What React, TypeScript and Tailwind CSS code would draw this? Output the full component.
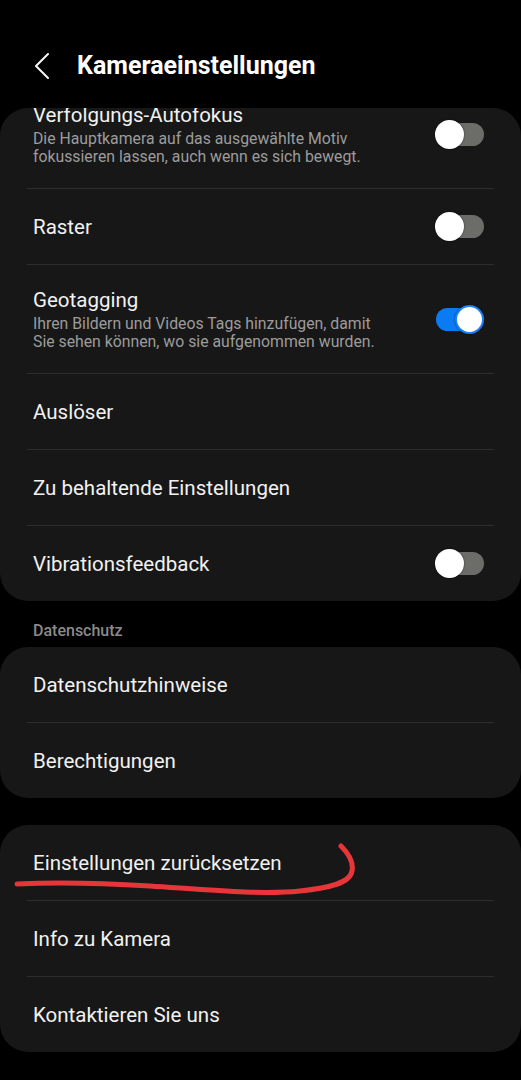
import React from 'react';

// ─── Small pieces ────────────────────────────────────────────────────────────

const Toggle: React.FC<{ on?: boolean }> = ({ on }) => (
  <div className="relative w-[49px] h-[29px] shrink-0">
    <div
      className={`absolute left-[1px] right-0 top-[3px] h-[23px] rounded-full ${
        on ? 'bg-[#0b7bf4]' : 'bg-[#6c6c69]'
      }`}
    />
    <div
      className={`absolute top-0 w-[29px] h-[29px] rounded-full bg-white shadow-[0_0_2px_rgba(0,0,0,0.6)] ${
        on ? 'right-0 border-2 border-[#1b80f6]' : 'left-0'
      }`}
    />
  </div>
);

const Divider = () => <div className="mx-[27px] h-px bg-[#2d2d2d]" />;

interface RowProps {
  title: string;
  desc?: React.ReactNode;
  toggle?: 'on' | 'off';
  className?: string;
}

const Row: React.FC<RowProps> = ({ title, desc, toggle, className = '' }) => (
  <div
    className={`flex items-center justify-between pl-[33px] pr-[37px] ${
      desc ? 'pt-[23px] pb-[22px]' : 'h-[75px]'
    } ${className}`}
  >
    <div className="flex flex-col">
      <span className="text-[20.5px] leading-[24px] text-[#f1f1f1]">{title}</span>
      {desc && (
        <span className="mt-[3px] text-[15.8px] leading-[18px] text-[#9c9c9c]">{desc}</span>
      )}
    </div>
    {toggle && <Toggle on={toggle === 'on'} />}
  </div>
);

// ─── Page ────────────────────────────────────────────────────────────────────

export default function App() {
  return (
    <div className="w-[521px] min-h-[1080px] bg-black font-['Roboto','Liberation_Sans',sans-serif]">
      {/* Header */}
      <div className="pt-[44px] pb-[20px]">
        <div className="flex items-center h-[44px]">
          <svg width="14" height="26" viewBox="0 0 14 26" className="ml-[35px]">
            <polyline
              points="13,1 1,13 13,25"
              fill="none"
              stroke="#f5f5f5"
              strokeWidth="2"
              strokeLinecap="round"
              strokeLinejoin="round"
            />
          </svg>
          <span className="ml-[28px] text-[25px] font-bold text-white">
            Kameraeinstellungen
          </span>
        </div>
      </div>

      {/* Camera settings card */}
      <div className="rounded-[28px] bg-[#171717] overflow-hidden">
        <Row
          className="-mt-[28px]"
          title="Verfolgungs-Autofokus"
          desc={
            <>
              Die Hauptkamera auf das ausgewählte Motiv
              <br />
              fokussieren lassen, auch wenn es sich bewegt.
            </>
          }
          toggle="off"
        />
        <Divider />
        <Row title="Raster" toggle="off" />
        <Divider />
        <Row
          title="Geotagging"
          desc={
            <>
              Ihren Bildern und Videos Tags hinzufügen, damit
              <br />
              Sie sehen können, wo sie aufgenommen wurden.
            </>
          }
          toggle="on"
        />
        <Divider />
        <Row title="Auslöser" />
        <Divider />
        <Row title="Zu behaltende Einstellungen" />
        <Divider />
        <Row title="Vibrationsfeedback" toggle="off" />
      </div>

      {/* Section label */}
      <div className="pl-[33px] pt-[20px] pb-[6px] text-[16px] leading-[20px] font-medium text-[#8a8a8a]">
        Datenschutz
      </div>

      <div className="rounded-[28px] bg-[#171717]">
        <Row title="Datenschutzhinweise" />
        <Divider />
        <Row title="Berechtigungen" />
      </div>

      <div className="relative mt-[27px] rounded-[28px] bg-[#171717]">
        <Row title="Einstellungen zurücksetzen" />
        <Divider />
        <Row title="Info zu Kamera" />
        <Divider />
        <Row title="Kontaktieren Sie uns" />

        {/* Red hand-drawn underline */}
        <svg
          className="absolute inset-0 pointer-events-none"
          width="521"
          height="228"
          viewBox="0 0 521 228"
        >
          <path
            d="M17 59 C 60 57, 100 58, 150 61 C 210 65, 260 70, 300 66 C 330 63, 350 58, 352 46 C 354 36, 347 27, 341 21"
            fill="none"
            stroke="#e8353a"
            strokeWidth="5"
            strokeLinecap="round"
            strokeLinejoin="round"
          />
        </svg>
      </div>
    </div>
  );
}
